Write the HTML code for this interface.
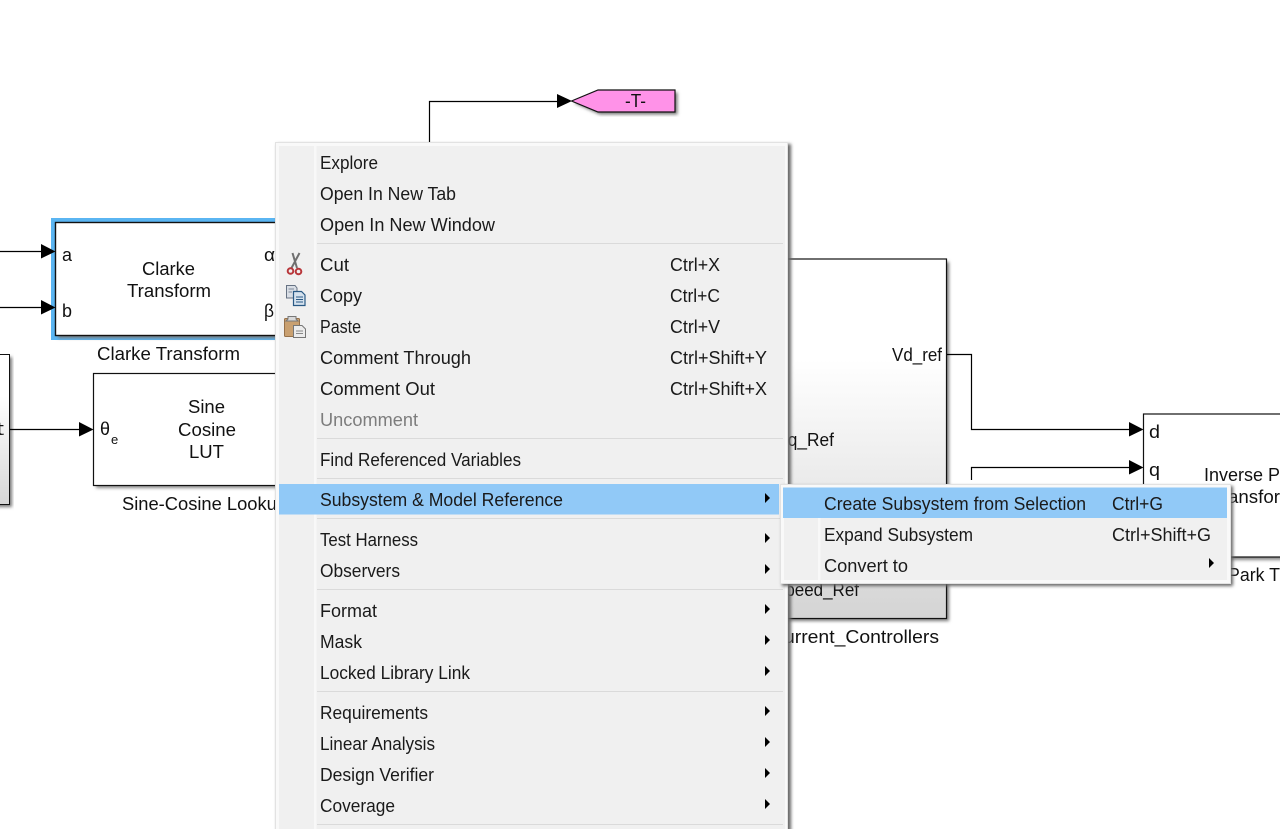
<!DOCTYPE html>
<html><head><meta charset="utf-8"><style>
html,body{margin:0;padding:0;background:#fff;width:1280px;height:829px;overflow:hidden}
svg{display:block}
.d{font-family:"Liberation Sans",sans-serif;font-size:18px;fill:#111}
.m{font-family:"Liberation Sans",sans-serif;font-size:18px;fill:#1a1a1a}
</style></head><body>
<svg width="1280" height="829" viewBox="0 0 1280 829" xmlns="http://www.w3.org/2000/svg">
<defs>
<filter id="s" x="-10%" y="-10%" width="120%" height="120%"><feGaussianBlur stdDeviation="1.6"/></filter>
<linearGradient id="g1" x1="0" y1="0" x2="0" y2="1"><stop offset="0" stop-color="#fff"/><stop offset=".28" stop-color="#fff"/><stop offset="1" stop-color="#d6d6d6"/></linearGradient>
<linearGradient id="g2" x1="0" y1="0" x2="0" y2="1"><stop offset="0" stop-color="#fff"/><stop offset=".28" stop-color="#fff"/><stop offset="1" stop-color="#d4d4d4"/></linearGradient>
</defs>

<!-- left gradient block -->
<rect x="-5" y="357" width="17" height="150" fill="#777" filter="url(#s)"/>
<rect x="-5" y="354.5" width="14.5" height="150" fill="url(#g1)" stroke="#111" stroke-width="1"/>
<text class="d" x="-5" y="435" textLength="9" lengthAdjust="spacingAndGlyphs">t</text>

<!-- Clarke block -->
<rect x="51" y="218" width="240" height="122" fill="#5ab5f2"/>
<rect x="58" y="225" width="230" height="113" fill="#777" filter="url(#s)"/>
<rect x="55.5" y="222.5" width="235" height="113" fill="#fff" stroke="#111" stroke-width="1.4"/>
<path d="M0 251.500H42M0 307.500H42" stroke="#000" stroke-width="1.200" fill="none"/>
<path d="M41 244L55.500 251.500L41 258.500ZM41 300L55.500 307.500L41 314.500Z" fill="#000"/>
<text class="d" x="62" y="261" textLength="10" lengthAdjust="spacingAndGlyphs">a</text>
<text class="d" x="62" y="317" textLength="10" lengthAdjust="spacingAndGlyphs">b</text>
<text class="d" x="264" y="261" textLength="11" lengthAdjust="spacingAndGlyphs">α</text>
<text class="d" x="264" y="317" textLength="10" lengthAdjust="spacingAndGlyphs">β</text>
<text class="d" x="142" y="275" textLength="53" lengthAdjust="spacingAndGlyphs">Clarke</text>
<text class="d" x="127" y="297" textLength="84" lengthAdjust="spacingAndGlyphs">Transform</text>
<text class="d" x="97" y="360" textLength="143" lengthAdjust="spacingAndGlyphs">Clarke Transform</text>

<!-- Sine block -->
<rect x="96" y="376" width="200" height="112" fill="#888" filter="url(#s)"/>
<rect x="93.500" y="373.500" width="200" height="112" fill="#fff" stroke="#111" stroke-width="1.200"/>
<path d="M10 429.500H80" stroke="#000" stroke-width="1.200"/>
<path d="M79 422L93.500 429.500L79 436.500Z" fill="#000"/>
<text class="d" x="100" y="435" textLength="10" lengthAdjust="spacingAndGlyphs">θ</text>
<text x="111" y="444" style="font-family:'Liberation Sans',sans-serif;font-size:13px;fill:#111">e</text>
<text class="d" x="188" y="413" textLength="37" lengthAdjust="spacingAndGlyphs">Sine</text>
<text class="d" x="178" y="436" textLength="58" lengthAdjust="spacingAndGlyphs">Cosine</text>
<text class="d" x="189" y="458" textLength="35" lengthAdjust="spacingAndGlyphs">LUT</text>
<text class="d" x="122" y="510" textLength="165" lengthAdjust="spacingAndGlyphs">Sine-Cosine Lookup</text>

<!-- Goto tag -->
<path d="M429.500 142V101.500H558" stroke="#000" stroke-width="1.200" fill="none"/>
<path d="M557 94L572 101L557 108Z" fill="#000"/>
<path d="M574 103L600 92.500H677.500V114.500H600Z" fill="#777" filter="url(#s)"/>
<path d="M571.500 101L598 90H675V112H598Z" fill="#ff92e8" stroke="#111" stroke-width="1.200"/>
<text class="d" x="625" y="107" textLength="21" lengthAdjust="spacingAndGlyphs">-T-</text>

<!-- Central block -->
<rect x="740" y="262" width="209" height="359" fill="#777" filter="url(#s)"/>
<rect x="740" y="259" width="206.500" height="359.500" fill="url(#g2)" stroke="#111" stroke-width="1.200"/>
<text class="d" x="892" y="361" textLength="50" lengthAdjust="spacingAndGlyphs">Vd_ref</text>
<text class="d" x="783" y="446" textLength="51" lengthAdjust="spacingAndGlyphs">Iq_Ref</text>
<text class="d" x="774" y="596" textLength="85" lengthAdjust="spacingAndGlyphs">Speed_Ref</text>
<text class="d" x="770" y="643" textLength="169" lengthAdjust="spacingAndGlyphs">Current_Controllers</text>
<path d="M947 354.500H971.500V429.500H1130M971.500 480V467.500H1130" stroke="#000" stroke-width="1.200" fill="none"/>
<path d="M1129 422L1143.500 429.500L1129 436.500ZM1129 460L1143.500 467.500L1129 474.500Z" fill="#000"/>

<!-- Right block -->
<rect x="1146" y="417" width="160" height="143" fill="#888" filter="url(#s)"/>
<rect x="1143.500" y="414" width="160" height="143" fill="#fff" stroke="#111" stroke-width="1.200"/>
<text class="d" x="1149" y="438" textLength="11" lengthAdjust="spacingAndGlyphs">d</text>
<text class="d" x="1149" y="476" textLength="11" lengthAdjust="spacingAndGlyphs">q</text>
<text class="d" x="1204" y="481" textLength="76" lengthAdjust="spacingAndGlyphs">Inverse P</text>
<text class="d" x="1211" y="503" textLength="69" lengthAdjust="spacingAndGlyphs">Transfor</text>
<text class="d" x="1228" y="581" textLength="52" lengthAdjust="spacingAndGlyphs">Park T</text>

<!-- Main context menu -->
<rect x="277" y="144" width="514" height="700" fill="#666" filter="url(#s)"/>
<rect x="275.500" y="142.500" width="512" height="700" fill="#f9f9f9" stroke="#e2e2e2"/>
<rect x="279" y="146" width="506" height="690" fill="#f0f0f0"/>
<rect x="314" y="146" width="2.500" height="690" fill="#f8f8f8"/>

<g fill="#dadada">
<rect x="317" y="243" width="466" height="1"/>
<rect x="317" y="438" width="466" height="1"/>
<rect x="317" y="478" width="466" height="1"/>
<rect x="317" y="518" width="466" height="1"/>
<rect x="317" y="589" width="466" height="1"/>
<rect x="317" y="691" width="466" height="1"/>
<rect x="317" y="824" width="466" height="1"/>
</g>
<rect x="279" y="484" width="500" height="30.500" fill="#91c9f7"/>

<!-- scissors icon -->
<path d="M299.500 253L291.500 268M292.500 253L297 268" stroke="#6f6f6f" stroke-width="2" fill="none"/>
<circle cx="290.500" cy="271" r="2.800" fill="none" stroke="#b8363a" stroke-width="2"/>
<circle cx="298.500" cy="271.500" r="2.800" fill="none" stroke="#b8363a" stroke-width="2"/>
<!-- copy icon -->
<path d="M286.500 285.500H295L297 288V298H286.500Z" fill="#d9dee5" stroke="#667283"/>
<path d="M293.500 291.500H301.500L305 295V305.500H293.500Z" fill="#d5e2ee" stroke="#2a5a85" stroke-width="1.200"/>
<path d="M296 297H303M296 299.500H303M296 302H303" stroke="#2a5a85"/>
<path d="M288.500 289H294M288.500 292H292" stroke="#7f8b9a"/>
<!-- paste icon -->
<rect x="284.500" y="318.500" width="15" height="18" rx="1" fill="#c9a070" stroke="#96714a"/>
<path d="M288 319V316.500H296V319L298 321H286Z" fill="#d9d9d9" stroke="#777"/>
<path d="M293.500 325.500H302L305.500 329V337.500H293.500Z" fill="#ececec" stroke="#777"/>
<path d="M296 331H303M296 333.500H303" stroke="#888"/>

<g>
<text class="m" x="320" y="169" textLength="58" lengthAdjust="spacingAndGlyphs">Explore</text>
<text class="m" x="320" y="200" textLength="136" lengthAdjust="spacingAndGlyphs">Open In New Tab</text>
<text class="m" x="320" y="231" textLength="175" lengthAdjust="spacingAndGlyphs">Open In New Window</text>
<text class="m" x="320" y="271" textLength="29" lengthAdjust="spacingAndGlyphs">Cut</text>
<text class="m" x="320" y="302" textLength="42" lengthAdjust="spacingAndGlyphs">Copy</text>
<text class="m" x="320" y="333" textLength="41" lengthAdjust="spacingAndGlyphs">Paste</text>
<text class="m" x="320" y="364" textLength="151" lengthAdjust="spacingAndGlyphs">Comment Through</text>
<text class="m" x="320" y="395" textLength="115" lengthAdjust="spacingAndGlyphs">Comment Out</text>
<text class="m" x="320" y="426" textLength="98" lengthAdjust="spacingAndGlyphs" style="fill:#7d7d7d">Uncomment</text>
<text class="m" x="320" y="466" textLength="201" lengthAdjust="spacingAndGlyphs">Find Referenced Variables</text>
<text class="m" x="320" y="506" textLength="243" lengthAdjust="spacingAndGlyphs">Subsystem &amp; Model Reference</text>
<text class="m" x="320" y="546" textLength="98" lengthAdjust="spacingAndGlyphs">Test Harness</text>
<text class="m" x="320" y="577" textLength="80" lengthAdjust="spacingAndGlyphs">Observers</text>
<text class="m" x="320" y="617" textLength="57" lengthAdjust="spacingAndGlyphs">Format</text>
<text class="m" x="320" y="648" textLength="42" lengthAdjust="spacingAndGlyphs">Mask</text>
<text class="m" x="320" y="679" textLength="150" lengthAdjust="spacingAndGlyphs">Locked Library Link</text>
<text class="m" x="320" y="719" textLength="108" lengthAdjust="spacingAndGlyphs">Requirements</text>
<text class="m" x="320" y="750" textLength="115" lengthAdjust="spacingAndGlyphs">Linear Analysis</text>
<text class="m" x="320" y="781" textLength="114" lengthAdjust="spacingAndGlyphs">Design Verifier</text>
<text class="m" x="320" y="812" textLength="75" lengthAdjust="spacingAndGlyphs">Coverage</text>

<text class="m" x="670" y="271" textLength="50" lengthAdjust="spacingAndGlyphs">Ctrl+X</text>
<text class="m" x="670" y="302" textLength="50" lengthAdjust="spacingAndGlyphs">Ctrl+C</text>
<text class="m" x="670" y="333" textLength="50" lengthAdjust="spacingAndGlyphs">Ctrl+V</text>
<text class="m" x="670" y="364" textLength="97" lengthAdjust="spacingAndGlyphs">Ctrl+Shift+Y</text>
<text class="m" x="670" y="395" textLength="97" lengthAdjust="spacingAndGlyphs">Ctrl+Shift+X</text>
</g>

<g fill="#000">
<path d="M765 493L770 498L765 503Z"/>
<path d="M765 533L770 538L765 543Z"/>
<path d="M765 564L770 569L765 574Z"/>
<path d="M765 604L770 609L765 614Z"/>
<path d="M765 635L770 640L765 645Z"/>
<path d="M765 666L770 671L765 676Z"/>
<path d="M765 706L770 711L765 716Z"/>
<path d="M765 737L770 742L765 747Z"/>
<path d="M765 768L770 773L765 778Z"/>
<path d="M765 799L770 804L765 809Z"/>
</g>

<!-- Submenu -->
<rect x="782" y="486" width="451" height="100" fill="#666" filter="url(#s)"/>
<rect x="780.500" y="484.500" width="450" height="99" fill="#f9f9f9" stroke="#e2e2e2"/>
<rect x="784" y="488" width="443" height="92" fill="#f0f0f0"/>
<rect x="818" y="488" width="2.500" height="92" fill="#f8f8f8"/>
<rect x="783" y="487.500" width="444" height="30.500" fill="#91c9f7"/>
<g>
<text class="m" x="824" y="510" textLength="262" lengthAdjust="spacingAndGlyphs">Create Subsystem from Selection</text>
<text class="m" x="1112" y="510" textLength="51" lengthAdjust="spacingAndGlyphs">Ctrl+G</text>
<text class="m" x="824" y="541" textLength="149" lengthAdjust="spacingAndGlyphs">Expand Subsystem</text>
<text class="m" x="1112" y="541" textLength="99" lengthAdjust="spacingAndGlyphs">Ctrl+Shift+G</text>
<text class="m" x="824" y="572" textLength="84" lengthAdjust="spacingAndGlyphs">Convert to</text>
</g>
<path d="M1209 558L1214 563L1209 568Z" fill="#000"/>
</svg>
</body></html>
